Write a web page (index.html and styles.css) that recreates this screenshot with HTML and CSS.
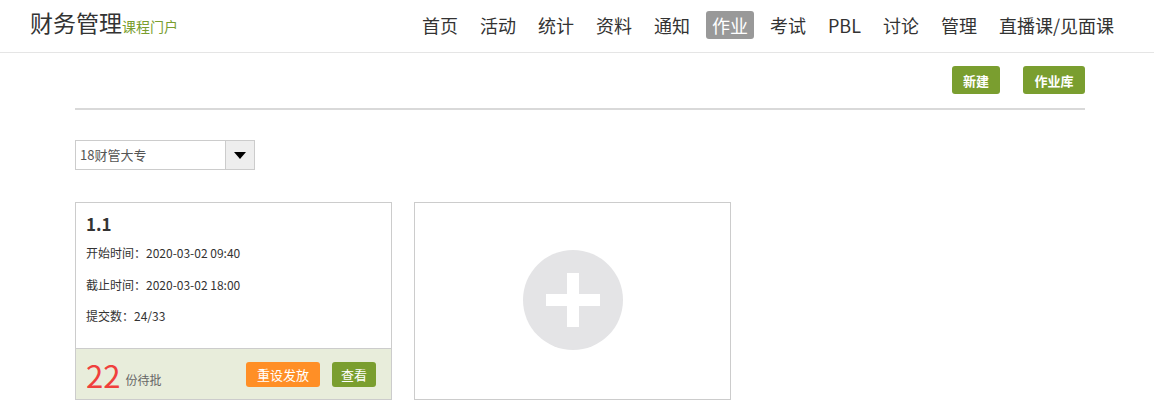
FILE: index.html
```html
<!DOCTYPE html>
<html lang="zh-CN">
<head>
  <meta charset="UTF-8" />
  <title>财务管理 - 作业</title>
  <link rel="stylesheet" href="styles.css">
</head>
<body>

<div class="header">
  <div class="logo">财务管理<span class="logo-sub">课程门户</span></div>
  <ul class="nav">
    <li>首页</li>
    <li>活动</li>
    <li>统计</li>
    <li>资料</li>
    <li>通知</li>
    <li class="active">作业</li>
    <li>考试</li>
    <li>PBL</li>
    <li>讨论</li>
    <li>管理</li>
    <li>直播课/见面课</li>
  </ul>
</div>

<div class="main">
  <div class="toolbar">
    <button class="btn btn-green btn-new">新建</button>
    <button class="btn btn-green btn-lib">作业库</button>
  </div>

  <div class="select">
    <span class="select-text">18财管大专</span>
    <span class="select-arrow"></span>
  </div>

  <div class="cards">
    <div class="card">
      <div class="card-body">
        <h3>1.1</h3>
        <p>开始时间：2020-03-02 09:40</p>
        <p>截止时间：2020-03-02 18:00</p>
        <p>提交数：24/33</p>
      </div>
      <div class="card-foot">
        <span class="count">22</span>
        <span class="count-label">份待批</span>
        <button class="btn btn-small btn-orange">重设发放</button>
        <button class="btn btn-small btn-green btn-view">查看</button>
      </div>
    </div>

    <div class="card card-add">
      <div class="add-circle"></div>
    </div>
  </div>
</div>

</body>
</html>
```

FILE: styles.css
```css
body {
  margin: 0;
  font-family: "Microsoft YaHei", "Noto Sans CJK SC", sans-serif;
  color: #333;
  background: #fff;
}

.header {
  height: 52px;
  border-bottom: 1px solid #e5e5e5;
  display: flex;
  justify-content: space-between;
  align-items: center;
  padding: 0 34px 0 30px;
}

.logo {
  font-size: 23px;
  line-height: 30px;
  color: #333;
  display: flex;
  align-items: baseline;
  margin-top: -4px;
}

.logo-sub {
  font-size: 14px;
  color: #7a9e2f;
}

.nav {
  list-style: none;
  margin: 0;
  padding: 0;
  display: flex;
  margin-top: -2px;
}

.nav li {
  font-size: 18px;
  line-height: 28px;
  padding: 0 6px;
  margin-left: 10px;
  border-radius: 3px;
  color: #333;
}

.nav li.active {
  background: #999;
  color: #fff;
}

.main {
  margin: 0 69px 0 75px;
}

.toolbar {
  display: flex;
  justify-content: flex-end;
  gap: 23px;
  padding: 13px 0 14px;
  border-bottom: 2px solid #d9d9d9;
}

.btn {
  font-family: inherit;
  border: none;
  border-radius: 3px;
  color: #fff;
  font-size: 13px;
  font-weight: bold;
  height: 28px;
  padding: 0;
  cursor: pointer;
}

.btn-new {
  width: 48px;
}

.btn-lib {
  width: 62px;
}

.btn-green {
  background: #7a9e2f;
}

.btn-orange {
  background: #ff8f26;
}

.select {
  width: 178px;
  height: 28px;
  margin-top: 30px;
  border: 1px solid #ccc;
  display: flex;
}

.select-text {
  flex: 1;
  font-size: 13px;
  line-height: 28px;
  padding-left: 4px;
  color: #555;
}

.select-arrow {
  width: 28px;
  background: #eee;
  border-left: 1px solid #ccc;
  position: relative;
}

.select-arrow::after {
  content: "";
  position: absolute;
  left: 8px;
  top: 11px;
  border-left: 6px solid transparent;
  border-right: 6px solid transparent;
  border-top: 7px solid #000;
}

.cards {
  display: flex;
  gap: 22px;
  margin-top: 32px;
}

.card {
  width: 315px;
  height: 196px;
  border: 1px solid #ccc;
  display: flex;
  flex-direction: column;
}

.card-body {
  flex: 1;
  padding: 8px 10px 0;
}

.card-body h3 {
  margin: 0;
  font-size: 17px;
  line-height: 26px;
  font-weight: bold;
}

.card-body p {
  margin: 0;
  font-size: 12px;
  line-height: 31.5px;
  color: #333;
}

.card-foot {
  height: 50px;
  border-top: 1px solid #ccc;
  background: #e8eddb;
  display: flex;
  align-items: center;
  padding: 0 15px 0 10px;
}

.count {
  font-size: 31px;
  line-height: 30px;
  color: #f0403c;
  margin-top: 2px;
}

.count-label {
  font-size: 12px;
  color: #666;
  margin: 10px auto 0 5px;
}

.btn-small {
  height: 25px;
  font-weight: normal;
  margin-left: 12px;
}

.btn-small.btn-orange {
  width: 74px;
}

.btn-view {
  width: 44px;
}

.card-add {
  justify-content: center;
  align-items: center;
}

.add-circle {
  width: 100px;
  height: 100px;
  border-radius: 50%;
  background: #e4e4e6;
  position: relative;
  margin-top: -3px;
}

.add-circle::before,
.add-circle::after {
  content: "";
  position: absolute;
  background: #fff;
}

.add-circle::before {
  left: 23px;
  top: 44px;
  width: 54px;
  height: 12px;
}

.add-circle::after {
  left: 44px;
  top: 23px;
  width: 12px;
  height: 54px;
}
```
